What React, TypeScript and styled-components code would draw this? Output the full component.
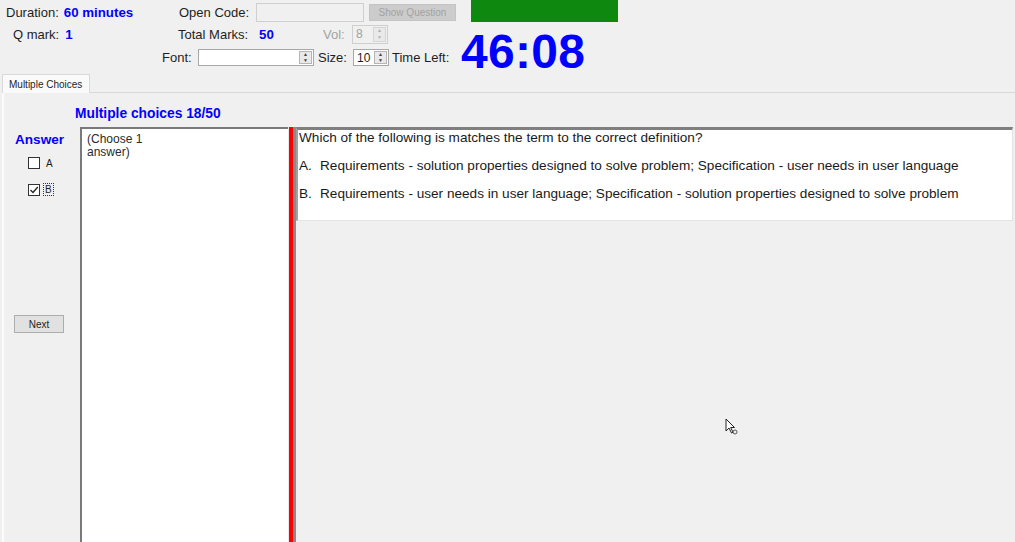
import React from 'react';
import styled, { createGlobalStyle, css } from 'styled-components';

const GlobalStyle = createGlobalStyle`
  html, body {
    margin: 0;
    padding: 0;
    background: #f0f0f0;
  }
  * { box-sizing: border-box; }
`;

const Page = styled.div`
  position: relative;
  width: 1015px;
  height: 542px;
  overflow: hidden;
  background: #f0f0f0;
  font-family: 'Liberation Sans', Arial, sans-serif;
  font-size: 13px;
  color: #1e1e1e;
  display: flex;
  flex-direction: column;
`;

const Header = styled.div`
  height: 74px;
  display: flex;
`;

const HeaderRows = styled.div`
  width: 461px;
  display: flex;
  flex-direction: column;
`;

const Row = styled.div<{ $h: number }>`
  height: ${(p) => p.$h}px;
  display: flex;
  align-items: center;
`;

const Cell = styled.div<{ $w?: number; $pl?: number }>`
  display: flex;
  align-items: center;
  flex: none;
  width: ${(p) => (p.$w ? `${p.$w}px` : 'auto')};
  padding-left: ${(p) => p.$pl || 0}px;
  white-space: nowrap;
`;

const Label = styled.span<{ $disabled?: boolean }>`
  color: ${(p) => (p.$disabled ? '#a3a3a3' : '#1e1e1e')};
`;

const Value = styled.span`
  color: #0000ff;
  font-weight: bold;
  font-size: 13.3px;
`;

const TextBox = styled.div<{ $w: number; $h: number; $disabled?: boolean }>`
  width: ${(p) => p.$w}px;
  height: ${(p) => p.$h}px;
  background: ${(p) => (p.$disabled ? '#f0f0f0' : '#ffffff')};
  border: 1px solid ${(p) => (p.$disabled ? '#cfcfcf' : '#a8a8a8')};
  display: flex;
  align-items: center;
  font-size: 12px;
  color: ${(p) => (p.$disabled ? '#a0a0a0' : '#1e1e1e')};
  padding-left: 3px;
  flex: none;
`;

const SpinBox = styled(TextBox)`
  justify-content: space-between;
  padding-right: 1px;
`;

const SpinArrows = styled.div<{ $disabled?: boolean }>`
  width: 13px;
  height: calc(100% - 2px);
  border: 1px solid ${(p) => (p.$disabled ? '#d5d5d5' : '#b5b5b5')};
  background: #e9e9e9;
  display: flex;
  flex-direction: column;
  align-items: center;
  justify-content: space-around;
  color: ${(p) => (p.$disabled ? '#b0b0b0' : '#404040')};
  font-size: 5px;
  line-height: 5px;
`;

const GreyButton = styled.div`
  margin-left: 5px;
  width: 87px;
  height: 17px;
  background: #cccccc;
  border: 1px solid #c4c4c4;
  color: #a2a2a2;
  font-size: 10px;
  display: flex;
  align-items: center;
  justify-content: center;
`;

const RightCol = styled.div`
  display: flex;
  flex-direction: column;
`;

const GreenBox = styled.div`
  margin-left: 10px;
  width: 147px;
  height: 22px;
  background: #0f880f;
`;

const Timer = styled.div`
  margin-top: 8px;
  height: 44px;
  line-height: 44px;
  font-size: 48px;
  font-weight: bold;
  color: #0000ff;
  letter-spacing: 0.3px;
`;

const TabStrip = styled.div`
  height: 18px;
  display: flex;
  padding-left: 2px;
`;

const Tab = styled.div`
  height: 19px;
  padding: 0 7px 0 6px;
  background: #fafafa;
  border: 1px solid #d9d9d9;
  border-bottom: none;
  font-size: 10px;
  display: flex;
  align-items: center;
  z-index: 1;
`;

const Panel = styled.div`
  flex: 1;
  margin-left: 2px;
  border-top: 1px solid #d9d9d9;
  border-left: 2px solid #fbfbfb;
  display: flex;
  flex-direction: column;
`;

const PanelTitle = styled.div`
  height: 34px;
  padding-left: 71px;
  padding-top: 13px;
  color: #0000ff;
  font-weight: bold;
  font-size: 13.8px;
`;

const Body = styled.div`
  flex: 1;
  display: flex;
  min-height: 0;
`;

const AnswerCol = styled.div`
  width: 76px;
  flex: none;
  display: flex;
  flex-direction: column;
  align-items: flex-start;
  padding-top: 5px;
`;

const AnswerTitle = styled.div`
  margin-left: 11px;
  color: #0000ff;
  font-weight: bold;
  font-size: 13.6px;
`;

const Choice = styled.div<{ $first?: boolean }>`
  margin-left: 24px;
  margin-top: ${(p) => (p.$first ? 10 : 14)}px;
  display: flex;
  align-items: center;
  gap: 5px;
  font-size: 10px;
`;

const Box = styled.div`
  width: 12px;
  height: 12px;
  border: 1px solid #333;
  background: #fff;
  display: flex;
  align-items: center;
  justify-content: center;
`;

const ChoiceLetter = styled.span<{ $focus?: boolean }>`
  padding: 0 1px;
  ${(p) =>
    p.$focus &&
    css`
      border: 1px dotted #333;
      margin-left: -2px;
    `}
`;

const NextButton = styled.div`
  margin-left: 10px;
  margin-top: 119px;
  width: 50px;
  height: 18px;
  background: #e1e1e1;
  border: 1px solid #adadad;
  font-size: 10px;
  display: flex;
  align-items: center;
  justify-content: center;
`;

const ChooseBox = styled.div`
  width: 208px;
  flex: none;
  background: #fff;
  border-left: 2px solid #7a7a7a;
  border-top: 2px solid #7a7a7a;
  padding: 4px 0 0 5px;
  font-size: 12px;
  line-height: 13px;
  color: #2a2a2a;
`;

const RedBar = styled.div`
  width: 5px;
  flex: none;
  background: #ff0000;
  border-left: 1px solid #e8e8e8;
`;

const Divider = styled.div`
  width: 3px;
  flex: none;
  background: #8a8a8a;
`;

const QuestionArea = styled.div`
  flex: 1;
  display: flex;
  flex-direction: column;
  align-items: stretch;
  padding-right: 2px;
`;

const QuestionCard = styled.div`
  height: 94px;
  background: #fff;
  border-top: 3px solid #7f7f7f;
  border-left: 2px solid #a0a0a0;
  border-right: 1px solid #e3e3e3;
  border-bottom: 1px solid #e3e3e3;
  padding: 0 0 0 1px;
  font-size: 13.6px;
  color: #1a1a1a;
`;

const QLine = styled.div<{ $gap?: number }>`
  margin-top: ${(p) => p.$gap || 0}px;
  line-height: 15px;
  white-space: nowrap;
`;

const OptLetter = styled.span`
  display: inline-block;
  width: 21px;
`;

const Cursor = styled.svg`
  position: absolute;
  left: 725px;
  top: 418px;
`;

const Spin = ({ w, h, value, disabled }: { w: number; h: number; value: string; disabled?: boolean }) => (
  <SpinBox $w={w} $h={h} $disabled={disabled}>
    <span>{value}</span>
    <SpinArrows $disabled={disabled}>
      <span>▲</span>
      <span>▼</span>
    </SpinArrows>
  </SpinBox>
);

export default function App() {
  return (
    <Page>
      <GlobalStyle />
      <Header>
        <HeaderRows>
          <Row $h={24}>
            <Cell $w={179} $pl={6}>
              <Label>Duration:</Label>
              <Value style={{ marginLeft: 5 }}>60 minutes</Value>
            </Cell>
            <Cell $w={77}>
              <Label>Open Code:</Label>
            </Cell>
            <TextBox $w={108} $h={19} $disabled />
            <GreyButton>Show Question</GreyButton>
          </Row>
          <Row $h={20}>
            <Cell $w={178} $pl={13}>
              <Label>Q mark:</Label>
              <Value style={{ marginLeft: 6 }}>1</Value>
            </Cell>
            <Cell $w={81}>
              <Label>Total Marks:</Label>
            </Cell>
            <Cell $w={64}>
              <Value>50</Value>
            </Cell>
            <Cell $w={29}>
              <Label $disabled>Vol:</Label>
            </Cell>
            <Spin w={36} h={19} value="8" disabled />
          </Row>
          <Row $h={27}>
            <Cell $w={198} $pl={162}>
              <Label>Font:</Label>
            </Cell>
            <Spin w={116} h={17} value="" />
            <Cell $w={39} $pl={4}>
              <Label>Size:</Label>
            </Cell>
            <Spin w={36} h={17} value="10" />
            <Cell $pl={3}>
              <Label>Time Left:</Label>
            </Cell>
          </Row>
        </HeaderRows>
        <RightCol>
          <GreenBox />
          <Timer>46:08</Timer>
        </RightCol>
      </Header>

      <TabStrip>
        <Tab>Multiple Choices</Tab>
      </TabStrip>

      <Panel>
        <PanelTitle>Multiple choices 18/50</PanelTitle>
        <Body>
          <AnswerCol>
            <AnswerTitle>Answer</AnswerTitle>
            <Choice $first>
              <Box />
              <ChoiceLetter>A</ChoiceLetter>
            </Choice>
            <Choice>
              <Box>
                <svg width="10" height="10" viewBox="0 0 10 10">
                  <path d="M1.5 5 L4 7.5 L8.8 2" fill="none" stroke="#222" strokeWidth="1.3" />
                </svg>
              </Box>
              <ChoiceLetter $focus>B</ChoiceLetter>
            </Choice>
            <NextButton>Next</NextButton>
          </AnswerCol>
          <ChooseBox>
            (Choose 1
            <br />
            answer)
          </ChooseBox>
          <RedBar />
          <Divider />
          <QuestionArea>
            <QuestionCard>
              <QLine>Which of the following is matches the term to the correct definition?</QLine>
              <QLine $gap={13}>
                <OptLetter>A.</OptLetter>Requirements - solution properties designed to solve problem; Specification - user needs in user language
              </QLine>
              <QLine $gap={13}>
                <OptLetter>B.</OptLetter>Requirements - user needs in user language; Specification - solution properties designed to solve problem
              </QLine>
            </QuestionCard>
          </QuestionArea>
        </Body>
      </Panel>

      <Cursor width="14" height="18" viewBox="0 0 14 18">
        <path d="M1 1 L1 13 L4 10 L6.5 15 L8 14.3 L5.7 9.5 L9.5 9.5 Z" fill="#fff" stroke="#222" strokeWidth="1" />
        <circle cx="10" cy="14" r="2" fill="none" stroke="#555" strokeWidth="1" />
      </Cursor>
    </Page>
  );
}
